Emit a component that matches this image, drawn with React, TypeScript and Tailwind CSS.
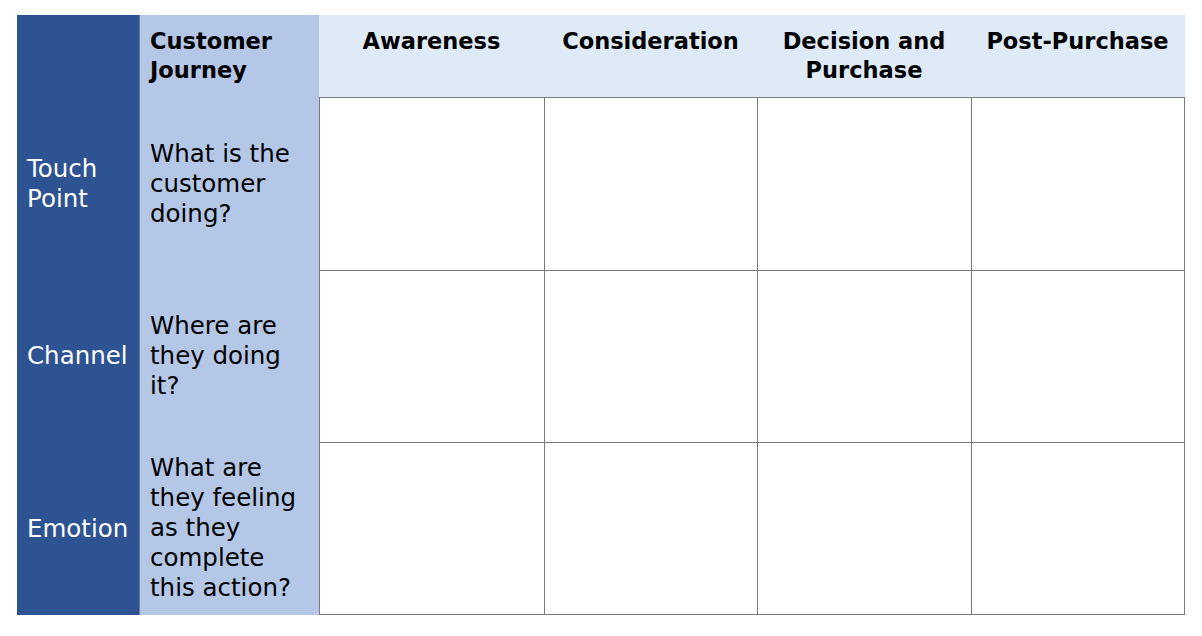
const STAGES = ["Awareness", "Consideration", "Decision and Purchase", "Post-Purchase"];

const ROWS = [
  { label: "Touch Point", question: "What is the customer doing?" },
  { label: "Channel", question: "Where are they doing it?" },
  { label: "Emotion", question: "What are they feeling as they complete this action?" },
];

const BodyCell = ({ last, bottom }: { last: boolean; bottom: boolean }) => (
  <div
    className={`bg-white border-l border-t border-[#7a7a7a] ${last ? "border-r" : ""} ${
      bottom ? "border-b" : ""
    }`}
  />
);

export default function App() {
  return (
    <div className="min-h-screen bg-white pl-[17px] pt-[15px] font-['DejaVu_Sans',sans-serif] text-black">
      <div className="grid grid-cols-[122px_180px_225px_213px_214px_214px] grid-rows-[82px_173px_172px_173px]">
        {/* left label column */}
        <div className="row-span-4 bg-[#2e5393] grid grid-rows-[82px_173px_172px_173px] text-white text-[24.5px] leading-[30px]">
          <div />
          {ROWS.map((row) => (
            <div key={row.label} className="flex items-center pl-[10px] pr-2">
              {row.label}
            </div>
          ))}
        </div>

        {/* question column */}
        <div className="row-span-4 bg-[#b4c7e7] border-l border-[#6b7d9e] grid grid-rows-[82px_173px_172px_172px]">
          <div className="pl-[10px] pt-[12px] text-[22.5px] font-bold leading-[29px]">
            Customer
            <br />
            Journey
          </div>
          {ROWS.map((row) => (
            <div key={row.label} className="flex items-center pl-[10px] pr-2 text-[24.5px] leading-[30px]">
              {row.question}
            </div>
          ))}
        </div>

        {/* stage headers */}
        {STAGES.map((stage, i) => (
          <div
            key={stage}
            className={`bg-[#deebf7] px-2 pt-[12px] text-center text-[22.5px] font-bold leading-[29px] ${
              i === 3 ? "border-r border-transparent" : ""
            }`}
          >
            {stage}
          </div>
        ))}

        {/* empty body cells */}
        {ROWS.map((row, r) =>
          STAGES.map((stage, c) => (
            <BodyCell key={row.label + stage} last={c === 3} bottom={r === 2} />
          ))
        )}
      </div>
    </div>
  );
}
